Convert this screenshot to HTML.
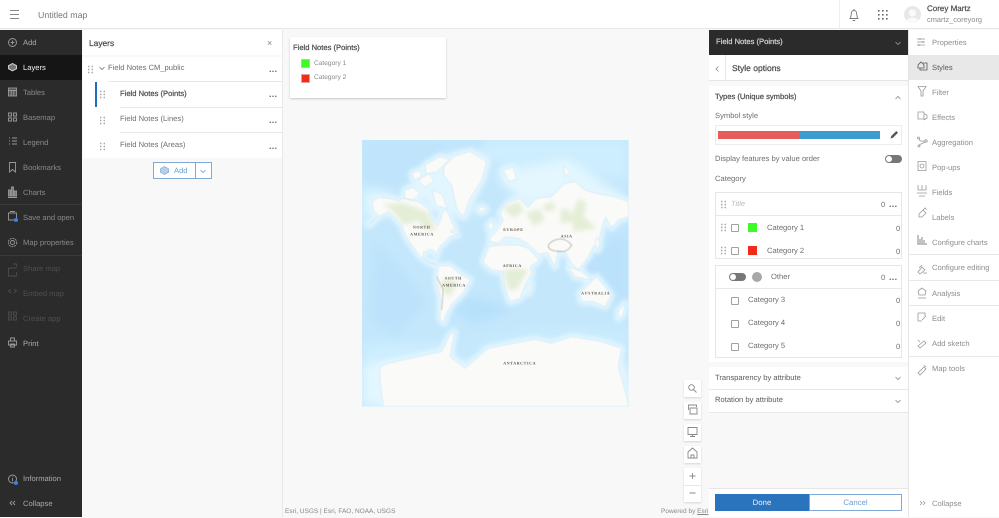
<!DOCTYPE html>
<html><head><meta charset="utf-8"><style>
*{box-sizing:border-box}
html,body{margin:0;padding:0;width:999px;height:517px;overflow:hidden;background:#f8f8f8;font-family:"Liberation Sans",sans-serif;text-rendering:geometricPrecision}
#w{position:absolute;left:0;top:0;width:999px;height:517px;filter:blur(.3px)}
.a{position:absolute;white-space:nowrap}
.t{position:absolute;white-space:nowrap;font-size:7.6px;line-height:12px;color:#6e6e6e;margin-top:1px}
.b{-webkit-text-stroke:.22px currentColor;color:#4a4a4a}
.side{color:#aaa;left:23px}
.dim{color:#4e4e4e}
.rt{left:932px;color:#8e8e8e}
.ln{position:absolute;background:#e8e8e8;height:1px}
svg{position:absolute;overflow:visible}
.grip{position:absolute;width:6px;height:9px;background-image:radial-gradient(circle,#aaa .7px,transparent 1px);background-size:3.5px 3px}
.dots{position:absolute;color:#666;font-size:9px;font-weight:bold;line-height:6px;letter-spacing:.3px}
.cb{position:absolute;width:8px;height:8px;border:1px solid #a2a2a2;border-radius:1px;background:#fff}
.tg{position:absolute;width:17px;height:8px;background:#777;border-radius:4px}
.tg i{position:absolute;left:1px;top:1px;width:6px;height:6px;border-radius:50%;background:#fff}
.mb{position:absolute;left:684px;width:17px;height:17px;background:#fff;box-shadow:0 1px 2px rgba(0,0,0,.14)}
</style></head><body><div id="w">
<!-- header -->
<div class="a" style="left:0;top:0;width:999px;height:29px;background:#fff;border-bottom:1px solid #e6e6e6"></div>
<div class="a" style="left:10px;top:10px;width:9px;height:9px;border-top:1px solid #888;border-bottom:1px solid #888"></div>
<div class="a" style="left:10px;top:14px;width:9px;height:1px;background:#888"></div>
<div class="t" style="left:38px;top:8px;font-size:8.8px;color:#777">Untitled map</div>
<div class="a" style="left:839px;top:0;width:1px;height:29px;background:#eee"></div>
<svg style="left:848px;top:8px" width="12" height="14" viewBox="0 0 12 14" fill="none" stroke="#777" stroke-width=".9"><path d="M1.500 10.500h9M2.500 10.500L3.500 5a2.500 2.500 0 0 1 5 0l1 5.500M6 1v1.500M4.800 12.500h2.400"/></svg>
<svg style="left:878px;top:10px" width="10" height="10" fill="#666"><rect x="0" y="0" width="1.600" height="1.600"/><rect x="4" y="0" width="1.600" height="1.600"/><rect x="8" y="0" width="1.600" height="1.600"/><rect x="0" y="4" width="1.600" height="1.600"/><rect x="4" y="4" width="1.600" height="1.600"/><rect x="8" y="4" width="1.600" height="1.600"/><rect x="0" y="8" width="1.600" height="1.600"/><rect x="4" y="8" width="1.600" height="1.600"/><rect x="8" y="8" width="1.600" height="1.600"/></svg>
<svg style="left:904px;top:6px" width="17" height="17"><defs><clipPath id="c"><circle cx="8.500" cy="8.500" r="8.500"/></clipPath></defs><circle cx="8.500" cy="8.500" r="8.500" fill="#e8e8e8"/><g clip-path="url(#c)" fill="#fafafa"><circle cx="8.500" cy="7" r="3.600"/><ellipse cx="8.500" cy="16" rx="6.500" ry="4.500"/></g></svg>
<div class="t b" style="left:927px;top:2px;font-size:8px">Corey Martz</div>
<div class="t" style="left:927px;top:13px;font-size:7.400px;color:#8a8a8a">cmartz_coreyorg</div>

<!-- left nav -->
<div class="a" style="left:0;top:30px;width:82px;height:487px;background:#2b2b2b"></div>
<div class="a" style="left:0;top:55px;width:82px;height:25px;background:#151515"></div>
<div class="a" style="left:0;top:204px;width:82px;height:1px;background:#3a3a3a"></div>
<div class="a" style="left:0;top:255px;width:82px;height:1px;background:#3a3a3a"></div>
<svg style="left:8px;top:36px" width="70" height="480" fill="none" stroke="#9a9a9a" stroke-width=".9">
<circle cx="4.500" cy="6.500" r="4"/><path d="M4.500 4.500v4M2.500 6.500h4"/>
<path d="M4.500 27.500l4 2.200v3l-4 2.200-4-2.200v-3z" stroke="#ddd" fill="#777"/>
<rect x=".5" y="52" width="8" height="8" fill="#555"/><path d="M.5 54.500h8M3.200 54.500V60M5.800 54.500V60"/>
<path d="M.5 77h3v3h-3zM5.500 77h3v3h-3zM.5 82h3v3h-3zM5.500 82h3v3h-3z"/>
<path d="M1 102h1M1 105h1M1 108h1M4 102h5M4 105h5M4 108h5"/>
<path d="M1.500 126.500h6V136l-3-2.500-3 2.500z"/>
<path d="M.5 160v-6h2v6zM3.500 160v-9h2v9zM6.500 160v-5h2v5zM0 161.500h9" fill="#777"/>
<path d="M.5 177h8v7h-8zM2 175.500h5"/>
<circle cx="4.500" cy="206.500" r="2"/><circle cx="4.500" cy="206.500" r="4.200" stroke-dasharray="2 .8"/>
<g stroke="#4c4c4c"><path d="M.5 232h8M.5 232v8h8v-4M5 228h3.500v3"/><path d="M3 253l-2.500 2 2.500 2M6 253l2.500 2-2.500 2"/><path d="M.5 276h3v3h-3zM5.500 276h3v3h-3zM.5 281h3v3h-3zM5.500 281h3v3h-3z"/></g>
<path d="M2.500 305v-3h4v3M.5 305h8v4h-8zM2.500 308h4v3h-4z"/>
<circle cx="4.500" cy="443" r="4"/><path d="M4.500 442v3.200M4.500 440.500v.5"/>
<path d="M4 465l-2 2 2 2M7 465l-2 2 2 2"/>
</svg>
<div class="a" style="left:14px;top:218px;width:4px;height:4px;border-radius:50%;background:#2f86e6"></div>
<div class="a" style="left:14px;top:481px;width:4px;height:4px;border-radius:50%;background:#2f86e6"></div>
<div class="t side" style="top:36px">Add</div>
<div class="t side" style="top:61px;color:#f0f0f0">Layers</div>
<div class="t side" style="top:86px;color:#8a8a8a">Tables</div>
<div class="t side" style="top:111px;color:#8a8a8a">Basemap</div>
<div class="t side" style="top:136px;color:#8a8a8a">Legend</div>
<div class="t side" style="top:161px;color:#8a8a8a">Bookmarks</div>
<div class="t side" style="top:186px;color:#8a8a8a">Charts</div>
<div class="t side" style="top:211px;color:#8a8a8a">Save and open</div>
<div class="t side" style="top:236px;color:#8a8a8a">Map properties</div>
<div class="t side dim" style="top:262px">Share map</div>
<div class="t side dim" style="top:287px">Embed map</div>
<div class="t side dim" style="top:312px">Create app</div>
<div class="t side" style="top:337px">Print</div>
<div class="t side" style="top:472px">Information</div>
<div class="t side" style="top:497px">Collapse</div>

<!-- layers panel -->
<div class="a" style="left:83px;top:30px;width:199px;height:25px;background:#fff"></div>
<div class="a" style="left:83px;top:57px;width:199px;height:101px;background:#fff"></div>
<div class="a" style="left:282px;top:30px;width:1px;height:487px;background:#e8e8e8"></div>
<div class="t b" style="left:89px;top:36px;font-size:8.400px">Layers</div>
<div class="t" style="left:267px;top:36px;font-size:9px;color:#888">×</div>
<div class="grip" style="left:87px;top:65px"></div>
<svg style="left:99px;top:66px" width="6" height="5" fill="none" stroke="#777" stroke-width=".8"><path d="M.5 1l2.500 2.500L5.500 1"/></svg>
<div class="t" style="left:108px;top:61px">Field Notes CM_public</div>
<div class="dots" style="left:269px;top:66px">...</div>
<div class="ln" style="left:108px;top:81px;width:174px"></div>
<div class="a" style="left:95px;top:82px;width:2px;height:25px;background:#1f6fbf"></div>
<div class="grip" style="left:99px;top:90px"></div>
<div class="t b" style="left:120px;top:87px">Field Notes (Points)</div>
<div class="dots" style="left:269px;top:91px">...</div>
<div class="ln" style="left:120px;top:107px;width:162px"></div>
<div class="grip" style="left:99px;top:116px"></div>
<div class="t" style="left:120px;top:112px">Field Notes (Lines)</div>
<div class="dots" style="left:269px;top:117px">...</div>
<div class="ln" style="left:120px;top:132px;width:162px"></div>
<div class="grip" style="left:99px;top:142px"></div>
<div class="t" style="left:120px;top:138px">Field Notes (Areas)</div>
<div class="dots" style="left:269px;top:143px">...</div>
<div class="a" style="left:153px;top:162px;width:59px;height:17px;background:#fff;border:1px solid #7fa9d6"></div>
<svg style="left:160px;top:166px" width="9" height="9" fill="#b9cfe7" stroke="#7fa9d6" stroke-width=".7"><path d="M4.500.5l4 2.200v3.600l-4 2.200-4-2.200V2.700z"/></svg>
<div class="t" style="left:174px;top:164px;color:#6a9ed0">Add</div>
<div class="a" style="left:195px;top:163px;width:1px;height:15px;background:#7fa9d6"></div>
<svg style="left:200px;top:169px" width="6" height="5" fill="none" stroke="#6a9ed0" stroke-width=".8"><path d="M.5 1l2.500 2.500L5.500 1"/></svg>

<!-- legend -->
<div class="a" style="left:290px;top:37px;width:156px;height:61px;background:#fff;box-shadow:0 1px 2px rgba(0,0,0,.2)"></div>
<div class="t b" style="left:293px;top:41px">Field Notes (Points)</div>
<div class="a" style="left:301px;top:59px;width:9px;height:9px;background:#3dfc26;border:1px solid #a5d8a0"></div>
<div class="t" style="left:314px;top:57px;font-size:6.600px;color:#8a8a8a">Category 1</div>
<div class="a" style="left:301px;top:74px;width:9px;height:9px;background:#f32a1a;border:1px solid #e8a09a"></div>
<div class="t" style="left:314px;top:71px;font-size:6.600px;color:#8a8a8a">Category 2</div>

<!-- map -->
<svg style="left:355px;top:130px" width="285" height="285" viewBox="0 0 855 855">
<defs><clipPath id="m"><rect x="21" y="30" width="800" height="800"/></clipPath>
<filter id="b1" x="-20%" y="-20%" width="140%" height="140%"><feGaussianBlur stdDeviation="16"/></filter>
<filter id="b2" x="-5%" y="-5%" width="110%" height="110%"><feGaussianBlur stdDeviation="1.500"/></filter>
<filter id="b3" x="-10%" y="-10%" width="120%" height="120%"><feGaussianBlur stdDeviation="6"/></filter>
<g id="land" stroke-linejoin="round">
<path d="M52 215L70 203 100 205 130 212 150 205 170 212 190 215 205 225 222 240 222 260 235 275 248 288 258 268 262 245 275 240 290 275 300 295 285 305 308 315 285 318 270 335 258 345 248 360 245 378 238 362 222 358 205 368 205 385 222 398 245 405 238 402 215 392 195 378 178 355 160 330 148 305 140 285 120 262 100 245 70 260 40 285 70 255 55 240Z"/>
<path d="M250 408L285 407 310 428 345 450 322 490 290 522 270 560 268 578 255 565 258 510 245 450Z"/>
<path d="M266 110L300 78 345 65 395 95 380 150 345 205 325 260 305 235 290 165 266 135Z"/>
<path d="M148 182l25-10 22 18-20 20-25-6zM210 105l45-25 28 8-38 38-32 6zM190 150l32-20 15 24-28 18zM232 180l30 14 15 42-35-10zM170 130l25-10 5 20-22 10z"/>
<path d="M368 235l15-5 10 8-15 8z"/>
<path d="M405 325L428 300 445 270 435 250 460 218 495 205 510 225 520 232 545 205 590 200 630 160 660 155 690 180 720 190 770 198 821 215 821 260 790 270 770 292 752 262 740 295 730 340 715 350 700 380 690 392 670 420 650 400 630 365 610 360 600 410 578 368 552 372 520 342 490 325 450 320 430 340 405 335Z"/>
<path d="M402 350L440 345 490 345 520 355 552 390 525 410 530 430 510 465 495 505 465 515 450 470 445 425 410 420 385 395Z"/>
<path d="M675 490L700 465 725 440 745 465 768 495 750 530 715 515 680 515Z"/>
<path d="M520 465l8-5-3 25-6 5zM445 120l30-8 10 35-22 8zM625 105l20 20-15 15zM790 545l20-25-5 30-15 15z"/>
<path d="M640 410l40 15 30 25-50-10zM725 320l10 15-5 25-10-20zM400 285l12-12 3 22-12 5z"/>
<path d="M75 712L100 700 190 680 260 665 285 615 298 605 285 680 330 715 400 655 540 628 590 640 650 620 740 635 800 655 790 710 815 800 820 830H85L75 750Z"/>
</g></defs>
<g clip-path="url(#m)">
<rect x="21" y="30" width="800" height="800" fill="#c4e7fc"/>
<g filter="url(#b1)">
<path d="M21 30H380V120L290 60 150 190 21 180Z" fill="#bfe4fb"/>
<path d="M380 30H821V150L700 130 600 100 470 120 400 90Z" fill="#cdeefe"/>
<path d="M21 170L130 190 60 250 21 290Z" fill="#dcf4ff"/>
<path d="M150 180L290 70 400 70 340 260 260 250Z" fill="#e2f6ff"/>
<path d="M420 130L640 90 821 210 500 220Z" fill="#e4f7ff"/>
<path d="M21 640H280L320 700H21Z" fill="#cdeefe"/>
<path d="M21 700H821V830H21Z" fill="#e3f7ff"/>
<path d="M330 640L560 590 821 590V650L400 680Z" fill="#c8ebfd"/>
<path d="M280 530L360 500 480 540 360 580Z" fill="#b6e0fb"/>
<path d="M620 400L821 300V540L700 450Z" fill="#bbe2fb"/>
<path d="M60 330L130 400 220 520 120 620 40 560Z" fill="#bce3fb"/>
</g>
<use href="#land" fill="#e2f6ff" stroke="#e2f6ff" stroke-width="22" filter="url(#b3)"/>
<use href="#land" fill="#fafaf8" stroke="#c5e1ef" stroke-width="1.500" filter="url(#b2)"/>
<g fill="#e4eed7" filter="url(#b3)">
<path d="M85 225L140 218 215 245 245 300 215 300 190 272 145 285 115 245Z"/>
<path d="M445 235l45-22 15 30-28 22zM512 250l42-14 15 34-32 18zM617 240l24-5 14 40-38 5zM670 205l25 15-10 40 40 35-70 10-5-50zM565 225l30-10 5 25-30 5z"/>
<path d="M262 445l48 10-25 45-20-15zM445 420l40-5 35 5-35 60h-25z"/>
</g>
<path d="M590 335q35-20 60 10-15 30-60 15-20-10 0-25" fill="none" stroke="#b3a99d" stroke-width="2.500" filter="url(#b2)"/>
<path d="M245 440l20 40-5 60" fill="none" stroke="#b3a99d" stroke-width="2" filter="url(#b2)"/>
<g font-family="Liberation Serif,serif" font-weight="bold" font-size="12" fill="#5c5954" text-anchor="middle" letter-spacing="1.800">
<text x="200" y="296">NORTH</text><text x="201" y="316">AMERICA</text><text x="475" y="303">EUROPE</text><text x="635" y="322">ASIA</text><text x="472" y="411">AFRICA</text><text x="295" y="449">SOUTH</text><text x="297" y="470">AMERICA</text><text x="722" y="494">AUSTRALIA</text><text x="494" y="703">ANTARCTICA</text></g>
</g></svg>

<!-- map buttons -->
<div class="mb" style="top:380px"></div><div class="mb" style="top:402px"></div><div class="mb" style="top:424px"></div><div class="mb" style="top:446px"></div><div class="mb" style="top:468px;height:34px"></div>
<div class="ln" style="left:684px;top:485px;width:17px"></div>
<svg style="left:684px;top:380px" width="17" height="125" fill="none" stroke="#888" stroke-width=".9">
<circle cx="7.500" cy="7.500" r="2.800"/><path d="M9.500 9.500l3 3"/>
<path d="M4.500 30v-5h8v2M6 28h7v6H6z"/>
<path d="M4 47.500h9v7H4zM8.500 54.500v1.500M6 56.500h5"/>
<path d="M8.500 68l4.500 4v6H4v-6zM7 78v-3h3v3"/>
<path d="M8.500 93v6M5.500 96h6M5.500 113h6"/></svg>
<div class="t" style="left:285px;top:505px;font-size:6.500px;color:#888">Esri, USGS | Esri, FAO, NOAA, USGS</div>
<div class="t" style="left:661px;top:505px;font-size:6.500px;color:#888">Powered by <u>Esri</u></div>

<!-- style panel -->
<div class="a" style="left:709px;top:30px;width:199px;height:25px;background:#2b2b2b"></div>
<div class="t" style="left:716px;top:35px;color:#d8d8d8;-webkit-text-stroke:.2px #d8d8d8">Field Notes (Points)</div>
<svg style="left:895px;top:41px" width="6" height="5" fill="none" stroke="#999" stroke-width=".8"><path d="M.5 1l2.500 2.500L5.500 1"/></svg>
<div class="a" style="left:709px;top:55px;width:199px;height:26px;background:#fff;border-bottom:1px solid #e6e6e6"></div>
<div class="a" style="left:725px;top:55px;width:1px;height:26px;background:#e6e6e6"></div>
<svg style="left:715px;top:66px" width="5" height="6" fill="none" stroke="#888" stroke-width=".8"><path d="M3.500.5L1 3l2.500 2.500"/></svg>
<div class="t b" style="left:732px;top:61px;font-size:8.500px">Style options</div>
<div class="a" style="left:709px;top:86px;width:199px;height:276px;background:#fff"></div>
<div class="t b" style="left:715px;top:90px">Types (Unique symbols)</div>
<svg style="left:895px;top:95px" width="6" height="5" fill="none" stroke="#888" stroke-width=".8"><path d="M.5 4L3 1.500 5.500 4"/></svg>
<div class="t" style="left:715px;top:109px">Symbol style</div>
<div class="a" style="left:715px;top:125px;width:187px;height:20px;border:1px solid #ececec;background:#fff"></div>
<div class="a" style="left:718px;top:131px;width:81px;height:8px;background:#e55d5a"></div>
<div class="a" style="left:799px;top:131px;width:81px;height:8px;background:#3d9bd0"></div>
<svg style="left:889px;top:129px" width="11" height="11"><path d="M1.500 9.500l.8-2.500 5-5 1.700 1.700-5 5z" fill="#555"/></svg>
<div class="t" style="left:715px;top:152px">Display features by value order</div>
<div class="tg" style="left:885px;top:155px"><i></i></div>
<div class="t" style="left:715px;top:172px">Category</div>
<div class="a" style="left:715px;top:192px;width:187px;height:67px;border:1px solid #e6e6e6;background:#fff"></div>
<div class="ln" style="left:716px;top:215px;width:185px"></div>
<div class="grip" style="left:720px;top:200px"></div>
<div class="t" style="left:731px;top:197px;font-style:italic;color:#bbb;font-size:7.500px">Title</div>
<div class="t" style="left:881px;top:198px">0</div>
<div class="dots" style="left:889px;top:201px">...</div>
<div class="grip" style="left:720px;top:223px"></div>
<div class="cb" style="left:731px;top:224px"></div>
<div class="a" style="left:748px;top:223px;width:9px;height:9px;background:#3dfc26"></div>
<div class="t" style="left:767px;top:221px">Category 1</div><div class="t" style="left:896px;top:222px">0</div>
<div class="grip" style="left:720px;top:246px"></div>
<div class="cb" style="left:731px;top:247px"></div>
<div class="a" style="left:748px;top:246px;width:9px;height:9px;background:#f32a1a"></div>
<div class="t" style="left:767px;top:244px">Category 2</div><div class="t" style="left:896px;top:245px">0</div>
<div class="a" style="left:715px;top:265px;width:187px;height:93px;border:1px solid #e6e6e6;background:#fff"></div>
<div class="ln" style="left:716px;top:288px;width:185px"></div>
<div class="tg" style="left:729px;top:273px"><i></i></div>
<div class="a" style="left:752px;top:272px;width:10px;height:10px;border-radius:50%;background:#a8a8a8"></div>
<div class="t" style="left:771px;top:270px">Other</div><div class="t" style="left:881px;top:271px">0</div>
<div class="dots" style="left:889px;top:274px">...</div>
<div class="cb" style="left:731px;top:297px"></div><div class="t" style="left:748px;top:293px">Category 3</div><div class="t" style="left:896px;top:294px">0</div>
<div class="cb" style="left:731px;top:320px"></div><div class="t" style="left:748px;top:316px">Category 4</div><div class="t" style="left:896px;top:317px">0</div>
<div class="cb" style="left:731px;top:343px"></div><div class="t" style="left:748px;top:339px">Category 5</div><div class="t" style="left:896px;top:340px">0</div>
<div class="a" style="left:709px;top:367px;width:199px;height:46px;background:#fff"></div>
<div class="ln" style="left:709px;top:389px;width:199px"></div>
<div class="ln" style="left:709px;top:412px;width:199px"></div>
<div class="t" style="left:715px;top:371px;color:#5a5a5a">Transparency by attribute</div>
<div class="t" style="left:715px;top:393px;color:#5a5a5a">Rotation by attribute</div>
<svg style="left:895px;top:376px" width="6" height="28" fill="none" stroke="#888" stroke-width=".8"><path d="M.5 1L3 3.500 5.500 1M.5 24L3 26.500 5.500 24"/></svg>
<div class="a" style="left:709px;top:488px;width:199px;height:29px;background:#fff;border-top:1px solid #e6e6e6"></div>
<div class="a" style="left:715px;top:494px;width:94px;height:17px;background:#2a74bd;color:#e8f0f8;font-size:7.800px;line-height:17px;text-align:center">Done</div>
<div class="a" style="left:809px;top:494px;width:93px;height:17px;background:#fff;border:1px solid #7fa9d6;color:#6a9ed0;font-size:7.800px;line-height:15px;text-align:center">Cancel</div>

<!-- right nav -->
<div class="a" style="left:908px;top:30px;width:91px;height:487px;background:#fff;border-left:1px solid #e6e6e6"></div>
<div class="a" style="left:909px;top:55px;width:90px;height:25px;background:#e8e8e8"></div>
<div class="ln" style="left:909px;top:254px;width:90px"></div>
<div class="ln" style="left:909px;top:280px;width:90px"></div>
<div class="ln" style="left:909px;top:305px;width:90px"></div>
<div class="ln" style="left:909px;top:356px;width:90px"></div>
<svg style="left:917px;top:36px" width="12" height="480" fill="none" stroke="#999" stroke-width=".8">
<path d="M0 3h8M0 6h8M0 9h8M3 2v2M6 5v2M2 8v2"/>
<path d="M1 29l3-3 3 3v3H1zM6 27h4v7H3v-2" stroke="#555"/>
<path d="M1 50.500h8L6 55v5H4v-5z"/>
<path d="M1 76h6v7H1zM7 78l3 1v3l-3 2"/>
<circle cx="1.500" cy="102" r="1"/><circle cx="2" cy="110" r="1"/><circle cx="9" cy="105" r="1.200"/><path d="M2 103c1 3 4 2 6 2M2 109l6-3"/>
<path d="M1 125.500h8v9H1z"/><circle cx="5" cy="130" r="2"/>
<path d="M1 149v5h8v-5M0 157h10M5 149v5M2 160h6"/>
<path d="M2 178l4-4 3 3-4 4H2zM5 175l3-3 1.500 1.500"/>
<path d="M1 199v9h9M3 207v-4M5 207v-6M7 207v-3" stroke-width="1.200"/>
<path d="M1 236l4-5 3 3-5 4zM2 232l3-3M6 237h4"/>
<path d="M5 252l-4 3 1 4h6l1-4zM1 262h8"/>
<path d="M1 277h7v3M1 277v8h4M5 284l4-4"/>
<path d="M1 310l6-5 2 2-6 5zM1 304l2 2"/>
<path d="M1 337l6-6 2 2-6 6zM7 329l2 2"/>
<path d="M3 465l2 2-2 2M6 465l2 2-2 2"/>
</svg>
<div class="t rt" style="top:36px">Properties</div>
<div class="t rt" style="top:61px;color:#5a5a5a">Styles</div>
<div class="t rt" style="top:86px">Filter</div>
<div class="t rt" style="top:111px">Effects</div>
<div class="t rt" style="top:136px">Aggregation</div>
<div class="t rt" style="top:161px">Pop-ups</div>
<div class="t rt" style="top:186px">Fields</div>
<div class="t rt" style="top:211px">Labels</div>
<div class="t rt" style="top:236px">Configure charts</div>
<div class="t rt" style="top:261px">Configure editing</div>
<div class="t rt" style="top:287px">Analysis</div>
<div class="t rt" style="top:312px">Edit</div>
<div class="t rt" style="top:337px">Add sketch</div>
<div class="t rt" style="top:362px">Map tools</div>
<div class="t rt" style="top:497px">Collapse</div>
</div></body></html>
